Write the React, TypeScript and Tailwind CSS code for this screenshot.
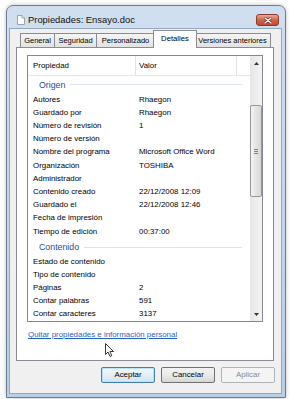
import React from "react";

const origen: [string, string][] = [
  ["Autores", "Rhaegon"],
  ["Guardado por", "Rhaegon"],
  ["Número de revisión", "1"],
  ["Número de versión", ""],
  ["Nombre del programa", "Microsoft Office Word"],
  ["Organización", "TOSHIBA"],
  ["Administrador", ""],
  ["Contenido creado", "22/12/2008 12:09"],
  ["Guardado el", "22/12/2008 12:46"],
  ["Fecha de impresión", ""],
  ["Tiempo de edición", "00:37:00"],
];

const contenido: [string, string][] = [
  ["Estado de contenido", ""],
  ["Tipo de contenido", ""],
  ["Páginas", "2"],
  ["Contar palabras", "591"],
  ["Contar caracteres", "3137"],
];

function Group({ label }: { label: string }) {
  return (
    <div className="flex h-[17px] items-center pt-[1px] pl-[11px] pr-[8px]">
      <span className="text-[8.8px] leading-none text-[#2b4d93]">{label}</span>
      <div className="ml-[5px] h-px flex-1 bg-[#dde3ec]" />
    </div>
  );
}

function Row({ name, value }: { name: string; value: string }) {
  return (
    <div className="flex h-[13.3px] items-center text-[7.9px] leading-none text-[#000]">
      <span className="w-[111px] shrink-0 pl-[5px]">{name}</span>
      <span>{value}</span>
    </div>
  );
}

function Tab({ label, w, selected }: { label: string; w: number; selected?: boolean }) {
  if (selected) {
    return (
      <div
        className="relative z-10 -mx-[2px] -mb-px flex h-[18px] items-center justify-center border border-b-0 border-[#898c95] bg-white pb-[2px] text-[7.7px] text-[#000]"
        style={{ width: w + 4 }}
      >
        {label}
      </div>
    );
  }
  return (
    <div
      className="-ml-px flex h-[14px] items-center justify-center border border-b-0 border-[#898c95] bg-gradient-to-b from-[#f5f5f5] to-[#e2e2e2] text-[7.5px] text-[#000] first:ml-0"
      style={{ width: w }}
    >
      {label}
    </div>
  );
}

export default function App() {
  return (
    <div className="relative h-[399px] w-[292px] overflow-hidden bg-white pl-[6px] pt-[5px] font-['Liberation_Sans',Arial,sans-serif]">
      {/* Window */}
      <div className="flex h-[393px] w-[280px] flex-col rounded-t-[7px] border border-[#6b7c90] bg-gradient-to-b from-[#d0dff0] via-[#c3d6ec] to-[#b8cfe8] shadow-[0_0_4px_rgba(0,0,0,0.25)]">
        {/* Title bar */}
        <div className="flex h-[22px] items-start pl-[10px] pr-[6px]">
          <svg width="8" height="10" viewBox="0 0 8 10" className="mt-[9px]">
            <path d="M0.5 0.5 H5 L7.5 3 V9.5 H0.5 Z" fill="#fff" stroke="#9aa5b3" />
            <path d="M5 0.5 V3 H7.5" fill="#e9edf2" stroke="#9aa5b3" />
          </svg>
          <span className="ml-[3px] mt-[9px] text-[9.4px] leading-none text-[#111]">Propiedades: Ensayo.doc</span>
          <div className="ml-auto mt-[8px] flex h-[12px] w-[23px] items-center justify-center rounded-[3px] border border-[#8b3a2c] bg-gradient-to-b from-[#e9a895] via-[#d2644a] to-[#c44a30]">
            <svg width="8" height="7" viewBox="0 0 8 7">
              <path d="M1 1 L7 6 M7 1 L1 6" stroke="#5a2218" strokeWidth="2.6" strokeLinecap="round" />
              <path d="M1 1 L7 6 M7 1 L1 6" stroke="#fff" strokeWidth="1.5" strokeLinecap="round" />
            </svg>
          </div>
        </div>

        {/* Client area */}
        <div className="mb-[3px] ml-[2px] mr-[3px] flex flex-1 flex-col border border-[#92a7c0] bg-[#f0f0f0]">
          {/* Tabs */}
          <div className="ml-[10px] flex h-[18px] items-end">
            <Tab label="General" w={35} />
            <Tab label="Seguridad" w={43} />
            <Tab label="Personalizado" w={59} />
            <Tab label="Detalles" w={40} selected />
            <Tab label="Versiones anteriores" w={77} />
          </div>

          {/* Panel */}
          <div className="ml-[6px] mr-[7px] flex h-[314px] flex-col border border-[#898c95] bg-white">
            <div className="ml-[10px] mt-[7px] flex h-[267px] w-[236px] border border-[#828790]">
              <div className="flex flex-1 flex-col overflow-hidden">
                <div className="flex h-[20px] shrink-0 border-b border-[#e6e6e6] text-[7.9px] text-[#000]">
                  <div className="flex w-[108px] items-center border-r border-[#e3e3e3] pl-[5px]">Propiedad</div>
                  <div className="flex w-[101px] items-center border-r border-[#e3e3e3] pl-[3px]">Valor</div>
                  <div className="flex-1" />
                </div>
                <Group label="Origen" />
                {origen.map(([n, v]) => (
                  <Row key={n} name={n} value={v} />
                ))}
                <Group label="Contenido" />
                {contenido.map(([n, v]) => (
                  <Row key={n} name={n} value={v} />
                ))}
              </div>
              {/* Scrollbar */}
              <div className="flex w-[12px] flex-col bg-gradient-to-r from-[#e6e6e6] to-[#f3f3f3]">
                <div className="flex h-[14px] items-center justify-center">
                  <svg width="5" height="3" viewBox="0 0 5 3">
                    <path d="M0 3 L2.5 0 L5 3 Z" fill="#333" />
                  </svg>
                </div>
                <div className="mt-[35px] flex h-[92px] items-center justify-center rounded-[2px] border border-[#979797] bg-gradient-to-r from-[#f4f4f4] to-[#d6d6d6]">
                  <div className="flex flex-col gap-[1px]">
                    <div className="h-px w-[4px] bg-[#808080]" />
                    <div className="h-px w-[4px] bg-[#808080]" />
                    <div className="h-px w-[4px] bg-[#808080]" />
                  </div>
                </div>
                <div className="flex-1" />
                <div className="flex h-[14px] items-center justify-center">
                  <svg width="5" height="3" viewBox="0 0 5 3">
                    <path d="M0 0 L2.5 3 L5 0 Z" fill="#333" />
                  </svg>
                </div>
              </div>
            </div>
            <a className="ml-[11px] mt-[8px] w-fit text-[7.9px] leading-[10px] text-[#1f64c4] underline">
              Quitar propiedades e información personal
            </a>
          </div>

          {/* Buttons */}
          <div className="mr-[6px] mt-[6px] flex justify-end gap-[6px] text-[7.9px]">
            <button className="h-[16px] w-[54px] rounded-[2px] border border-[#3c7fb1] bg-gradient-to-b from-[#f2f8fc] via-[#e3eef7] to-[#d2e4f2] text-[#000] shadow-[inset_0_0_0_1px_#bfe0f5]">
              Aceptar
            </button>
            <button className="h-[16px] w-[54px] rounded-[2px] border border-[#707070] bg-gradient-to-b from-[#f2f2f2] via-[#ebebeb] to-[#d6d6d6] text-[#000]">
              Cancelar
            </button>
            <button className="h-[16px] w-[54px] rounded-[2px] border border-[#adb2b5] bg-[#f4f4f4] text-[#8a8a8a]">
              Aplicar
            </button>
          </div>
        </div>
      </div>

      {/* Mouse cursor */}
      <svg className="absolute left-[105px] top-[343px]" width="10" height="15" viewBox="0 0 10 15">
        <path d="M0.5 0.5 V11.5 L3 9 L5 13.5 L6.8 12.7 L4.9 8.5 H8.5 Z" fill="#fff" stroke="#222" strokeWidth="0.9" strokeLinejoin="round" />
      </svg>
    </div>
  );
}
